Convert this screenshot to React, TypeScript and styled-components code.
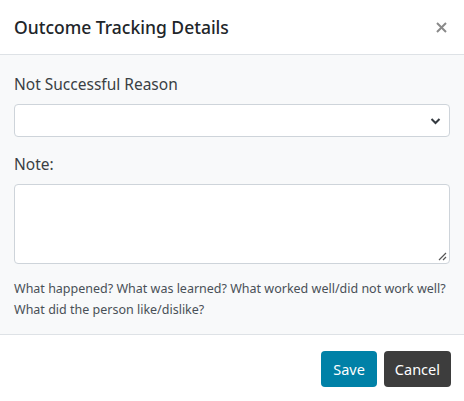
import React from 'react';
import styled, { createGlobalStyle } from 'styled-components';

const GlobalStyle = createGlobalStyle`
  html, body {
    margin: 0;
    padding: 0;
    background: #ffffff;
  }
  body {
    font-family: 'Noto Sans', 'Open Sans', sans-serif;
    color: #212529;
  }
`;

const Modal = styled.div`
  width: 464px;
  height: 401px;
  display: flex;
  flex-direction: column;
  background: #ffffff;
`;

const Header = styled.div`
  height: 55px;
  box-sizing: border-box;
  display: flex;
  align-items: center;
  justify-content: space-between;
  padding: 0 16px 0 14px;
  border-bottom: 1px solid #dee2e6;
`;

const Title = styled.h5`
  margin: 0;
  font-size: 17.5px;
  font-weight: 500;
  color: #212529;
`;

const Close = styled.button`
  border: none;
  background: none;
  padding: 0;
  width: 14px;
  height: 14px;
  display: flex;
  align-items: center;
  justify-content: center;
  cursor: pointer;
`;

const Body = styled.div`
  background: #f8f9fa;
  padding: 17px 14px 14px;
  border-bottom: 1px solid #dee2e6;
  display: flex;
  flex-direction: column;
`;

const Label = styled.label`
  font-size: 15.5px;
  color: #3a3f44;
  line-height: 24px;
  margin-bottom: 8px;
`;

const Select = styled.div`
  height: 33px;
  box-sizing: border-box;
  background: #ffffff;
  border: 1px solid #ced4da;
  border-radius: 4px;
  display: flex;
  align-items: center;
  justify-content: flex-end;
  padding-right: 8px;
  margin-bottom: 15px;
`;

const TextArea = styled.div`
  position: relative;
  height: 80px;
  box-sizing: border-box;
  background: #ffffff;
  border: 1px solid #ced4da;
  border-radius: 4px;
  margin-bottom: 14px;
`;

const Grip = styled.svg`
  position: absolute;
  right: 2px;
  bottom: 2px;
`;

const Help = styled.p`
  margin: 0;
  font-size: 12.5px;
  line-height: 21px;
  color: #495057;
`;

const Footer = styled.div`
  flex: 1;
  display: flex;
  justify-content: flex-end;
  align-items: flex-start;
  gap: 7px;
  padding: 16px 13px 0 0;
`;

const Button = styled.button<{ $variant: 'primary' | 'dark' }>`
  height: 36px;
  border: none;
  border-radius: 4px;
  font-family: 'Noto Sans', 'Open Sans', sans-serif;
  font-size: 14.5px;
  color: #ffffff;
  padding: 0 ${({ $variant }) => ($variant === 'primary' ? '12px' : '11px')};
  background: ${({ $variant }) => ($variant === 'primary' ? '#0081a7' : '#3d3d3d')};
  cursor: pointer;
`;

export default function App() {
  return (
    <>
      <GlobalStyle />
      <Modal>
        <Header>
          <Title>Outcome Tracking Details</Title>
          <Close aria-label="Close">
            <svg width="11" height="11" viewBox="0 0 11 11">
              <path d="M1 1L10 10M10 1L1 10" stroke="#8a8a8a" strokeWidth="2" />
            </svg>
          </Close>
        </Header>
        <Body>
          <Label>Not Successful Reason</Label>
          <Select>
            <svg width="11" height="8" viewBox="0 0 11 8">
              <path d="M1.5 2L5.5 6L9.5 2" stroke="#343a40" strokeWidth="2" fill="none" />
            </svg>
          </Select>
          <Label>Note:</Label>
          <TextArea>
            <Grip width="9" height="9" viewBox="0 0 9 9">
              <path d="M8 1L1 8M8 5L5 8" stroke="#555" strokeWidth="1.2" />
            </Grip>
          </TextArea>
          <Help>
            What happened? What was learned? What worked well/did not work well?
            <br />
            What did the person like/dislike?
          </Help>
        </Body>
        <Footer>
          <Button $variant="primary">Save</Button>
          <Button $variant="dark">Cancel</Button>
        </Footer>
      </Modal>
    </>
  );
}
